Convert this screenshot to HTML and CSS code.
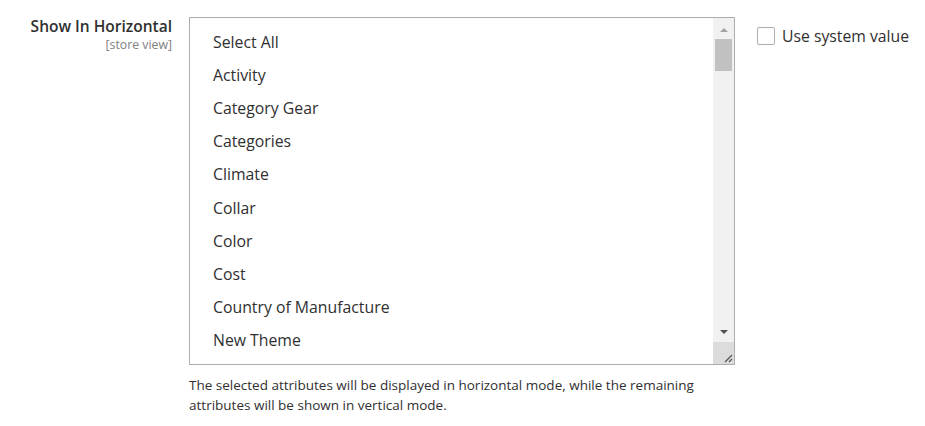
FILE: index.html
```html
<!DOCTYPE html>
<html>
<head>
<meta charset="utf-8">
<link rel="stylesheet" href="styles.css">
</head>
<body>
<div class="field">
  <div class="label">
    <div class="label-title">Show In Horizontal</div>
    <div class="scope">[store view]</div>
  </div>
  <div class="control">
    <div class="multiselect">
      <ul class="options">
        <li>Select All</li>
        <li>Activity</li>
        <li>Category Gear</li>
        <li>Categories</li>
        <li>Climate</li>
        <li>Collar</li>
        <li>Color</li>
        <li>Cost</li>
        <li>Country of Manufacture</li>
        <li>New Theme</li>
      </ul>
      <div class="scrollbar">
        <div class="arrow-up"></div>
        <div class="thumb"></div>
        <div class="track"></div>
        <div class="arrow-down"></div>
        <div class="resizer">
          <svg width="10" height="10" viewBox="0 0 10 10"><path d="M9 2 L2 9 M9 6 L6 9" stroke="#555" stroke-width="1.3" fill="none"/></svg>
        </div>
      </div>
    </div>
    <div class="note">The selected attributes will be displayed in horizontal mode, while the remaining attributes will be shown in vertical mode.</div>
  </div>
  <label class="use-default">
    <span class="checkbox"></span>
    <span class="use-text">Use system value</span>
  </label>
</div>
</body>
</html>
```

FILE: styles.css
```css
html, body {
  margin: 0;
  padding: 0;
  background: #ffffff;
}
body {
  font-family: "Open Sans", "Liberation Sans", sans-serif;
  color: #303030;
}
.field {
  display: flex;
  align-items: flex-start;
  padding-top: 17px;
}
.label {
  width: 172px;
  text-align: right;
  padding-right: 17px;
  box-sizing: content-box;
}
.label-title {
  font-size: 15.5px;
  font-weight: 600;
  line-height: 19px;
}
.scope {
  font-size: 12.3px;
  color: #808080;
  line-height: 17px;
}
.control {
  width: 546px;
}
.multiselect {
  display: flex;
  height: 346px;
  border: 1px solid #adadad;
  background: #fff;
}
.options {
  flex: 1;
  list-style: none;
  margin: 0;
  padding: 7.5px 0 0 23px;
  font-size: 15.8px;
  line-height: 33.2px;
}
.options li {
  white-space: nowrap;
}
.scrollbar {
  width: 21px;
  background: #f1f1f1;
  display: flex;
  flex-direction: column;
  align-items: center;
}
.arrow-up {
  margin-top: 10px;
  width: 0;
  height: 0;
  border-left: 4px solid transparent;
  border-right: 4px solid transparent;
  border-bottom: 4px solid #a3a3a3;
}
.thumb {
  margin-top: 7px;
  width: 17px;
  height: 32px;
  background: #c1c1c1;
}
.track {
  flex: 1;
}
.arrow-down {
  width: 0;
  height: 0;
  border-left: 4px solid transparent;
  border-right: 4px solid transparent;
  border-top: 4px solid #505050;
  margin-bottom: 8px;
}
.resizer {
  align-self: stretch;
  height: 21px;
  background: #dcdcdc;
  display: flex;
  align-items: flex-end;
  justify-content: flex-end;
  padding: 0 1px 1px 0;
}
.note {
  margin-top: 10px;
  font-size: 13.5px;
  line-height: 20px;
  width: 530px;
}
.use-default {
  display: flex;
  align-items: center;
  margin-left: 22px;
  margin-top: 10px;
}
.checkbox {
  width: 16px;
  height: 16px;
  border: 1px solid #adadad;
  border-radius: 2px;
  background: #fff;
}
.use-text {
  margin-left: 7px;
  font-size: 15.75px;
  line-height: 18px;
  margin-top: -1px;
}
```
